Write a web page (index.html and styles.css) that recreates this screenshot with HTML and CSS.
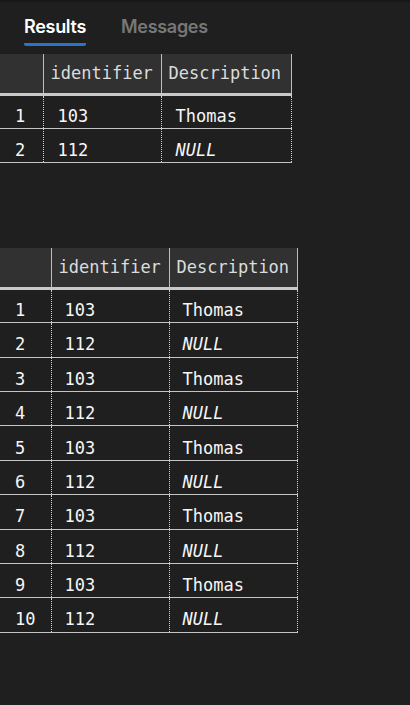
FILE: index.html
```html
<!DOCTYPE html>
<html>
<head>
<meta charset="utf-8">
<link rel="stylesheet" href="styles.css">
</head>
<body>
<div class="pane">
  <div class="tabs">
    <div class="tab active">Results</div>
    <div class="tab">Messages</div>
  </div>
  <table class="grid grid-a">
    <colgroup><col class="c-num-a"><col class="c-id"><col class="c-desc-a"></colgroup>
    <thead><tr><th></th><th>identifier</th><th>Description</th></tr></thead>
    <tbody>
      <tr><td>1</td><td>103</td><td>Thomas</td></tr>
      <tr><td>2</td><td>112</td><td class="null">NULL</td></tr>
    </tbody>
  </table>
  <table class="grid grid-b">
    <colgroup><col class="c-num-b"><col class="c-id"><col class="c-desc-b"></colgroup>
    <thead><tr><th></th><th>identifier</th><th>Description</th></tr></thead>
    <tbody>
      <tr><td>1</td><td>103</td><td>Thomas</td></tr>
      <tr><td>2</td><td>112</td><td class="null">NULL</td></tr>
      <tr><td>3</td><td>103</td><td>Thomas</td></tr>
      <tr><td>4</td><td>112</td><td class="null">NULL</td></tr>
      <tr><td>5</td><td>103</td><td>Thomas</td></tr>
      <tr><td>6</td><td>112</td><td class="null">NULL</td></tr>
      <tr><td>7</td><td>103</td><td>Thomas</td></tr>
      <tr><td>8</td><td>112</td><td class="null">NULL</td></tr>
      <tr><td>9</td><td>103</td><td>Thomas</td></tr>
      <tr><td>10</td><td>112</td><td class="null">NULL</td></tr>
    </tbody>
  </table>
</div>
</body>
</html>
```
FILE: styles.css
```css
html, body {
  margin: 0;
  padding: 0;
  background: #1f1f1f;
}
.pane {
  width: 410px;
  height: 705px;
  box-sizing: border-box;
  border-top: 2px solid #171717;
  background: #1f1f1f;
  overflow: hidden;
}
.tabs {
  display: flex;
  gap: 35px;
  padding: 12px 0 0 24px;
  box-sizing: border-box;
  height: 52px;
}
.tab {
  font-family: Inter, "Liberation Sans", sans-serif;
  font-size: 18px;
  font-weight: 600;
  letter-spacing: -0.3px;
  color: #777777;
  height: 32px;
  box-sizing: border-box;
  padding-top: 2px;
}
.tab.active {
  color: #ffffff;
  border-bottom: 3px solid #2a74c9;
  border-radius: 0 0 2px 2px;
}
.grid {
  border-collapse: collapse;
  table-layout: fixed;
  font-family: "DejaVu Sans Mono", monospace;
  font-size: 17px;
}
.grid-a { width: 291px; }
.grid-b { width: 297px; margin-top: 85px; }
.c-num-a { width: 43px; }
.c-num-b { width: 51px; }
.c-id { width: 118px; }
.c-desc-a { width: 130px; }
.c-desc-b { width: 128px; }
.grid th {
  background: #313131;
  color: #dcdcdc;
  font-weight: normal;
  text-align: left;
  height: 40px;
  padding: 0 0 1px 7px;
  border-bottom: 3px solid #c9c9c9;
  border-left: 1px solid #bdbdbd;
  box-sizing: border-box;
  white-space: nowrap;
  overflow: hidden;
}
.grid th:first-child { border-left: none; }
.grid th:last-child { border-right: 1px solid #bdbdbd; }
.grid td {
  color: #f6f6f6;
  height: 34.4px;
  padding: 9px 0 0 14px;
  border-bottom: 1px solid #c4c4c4;
  border-left: 1px dotted #d0d0d0;
  white-space: nowrap;
  box-sizing: border-box;
}
.grid td:first-child {
  border-left: none;
  padding-left: 15px;
}
.grid td:last-child { border-right: 1px dotted #d0d0d0; }
.grid-b td { padding-left: 13px; }
.grid td.null { font-style: italic; }
```
